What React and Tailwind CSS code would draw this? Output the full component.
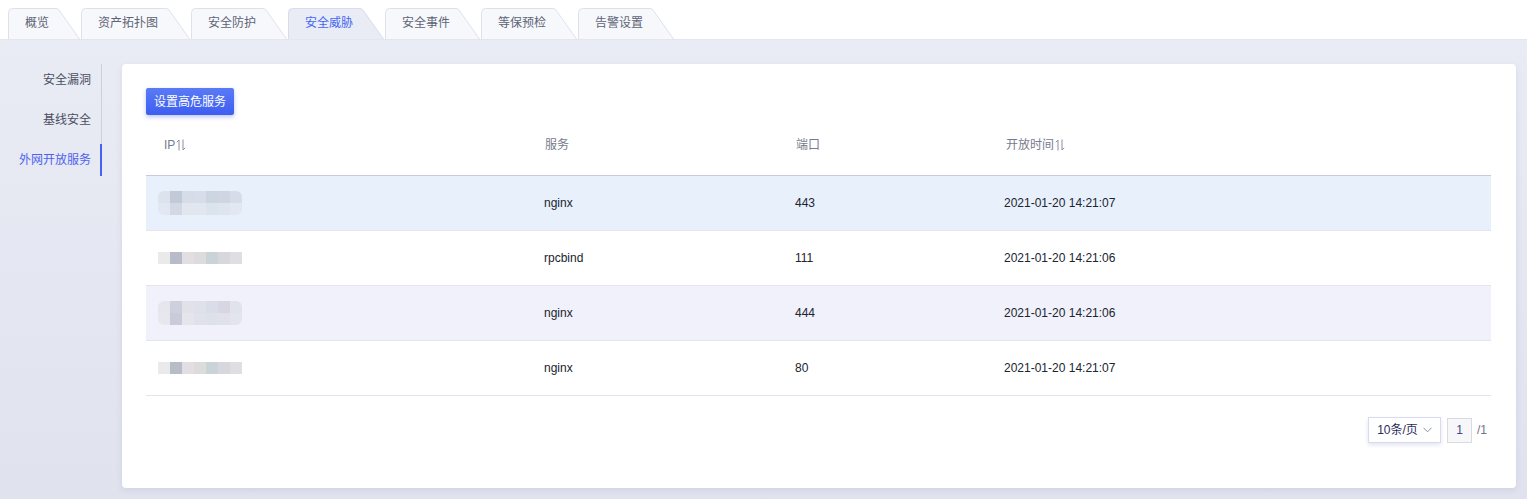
import React from "react";

const tabs = [
  { label: "概览", w: 72 },
  { label: "资产拓扑图", w: 109 },
  { label: "安全防护", w: 96 },
  { label: "安全威胁", w: 96, active: true },
  { label: "安全事件", w: 95 },
  { label: "等保预检", w: 96 },
  { label: "告警设置", w: 96 },
];

function Tab({ label, w, active }) {
  const h = 31;
  const d = `M0.5 ${h} V4.5 Q0.5 0.5 4.5 0.5 H${w - 24} Q${w - 22} 0.5 ${w - 21} 2 L${w - 0.5} ${h}`;
  return (
    <div className="relative h-[31px] shrink-0" style={{ width: w }}>
      <svg className="absolute inset-0" width={w} height={h + 1} viewBox={`0 0 ${w} ${h + 1}`}>
        <path d={d + " Z"} fill={active ? "#e9ebf5" : "#f7f8fc"} stroke="none" />
        <path d={d} fill="none" stroke={active ? "#d9dcee" : "#dfe0ee"} strokeWidth="1" />
      </svg>
      <span
        className={`relative block pl-[17px] pt-[8px] text-[12px] leading-[14px] ${
          active ? "text-[#4467f2]" : "text-[#5d6475]"
        }`}
      >
        {label}
      </span>
    </div>
  );
}

function SortIcon() {
  return (
    <svg width="10" height="12" viewBox="0 0 10 12" className="ml-[1px] inline-block">
      <path d="M3 11.5 V1 L0.8 3.2" fill="none" stroke="#8a8f9c" strokeWidth="1" />
      <path d="M7 0.5 V11 L9.2 8.8" fill="none" stroke="#8a8f9c" strokeWidth="1" />
    </svg>
  );
}

const blurs = {
  tall1: [
    ["#dde3ec", "#c2c9d8", "#d7dde8", "#d8dee9", "#ccd5e2", "#cfd6e2", "#d6dde8"],
    ["#e2e8f1", "#d2d9e5", "#e1e6ef", "#e1e7f0", "#dbe3ec", "#dfe5ee", "#e2e8f1"],
  ],
  short: [["#e9eae9", "#b8bcc8", "#e2dfe2", "#dcdcdc", "#c9d3d8", "#d8d7dc", "#dfdfe3"]],
  tall3: [
    ["#e6e7ee", "#ced0de", "#e2e0e8", "#dfe1ea", "#d9dde7", "#d8d6e3", "#e0e2ec"],
    ["#e7e8ef", "#c9cbd9", "#e5e5ed", "#e0e1eb", "#dde1ea", "#e1e1ec", "#e3e4ee"],
  ],
};

function Mosaic({ kind }) {
  const rows = blurs[kind];
  const rounded = kind === "short" ? "" : "rounded-[6px]";
  return (
    <div className={`flex flex-col overflow-hidden ${rounded} w-[84px]`}>
      {rows.map((r, i) => (
        <div key={i} className="flex h-[12px]">
          {r.map((c, j) => (
            <div key={j} className="w-[12px] h-full" style={{ background: c }} />
          ))}
        </div>
      ))}
    </div>
  );
}

const rows = [
  { ip: "tall1", svc: "nginx", port: "443", time: "2021-01-20 14:21:07", bg: "bg-[#e8f0fc]" },
  { ip: "short", svc: "rpcbind", port: "111", time: "2021-01-20 14:21:06", bg: "bg-white" },
  { ip: "tall3", svc: "nginx", port: "444", time: "2021-01-20 14:21:06", bg: "bg-[#f0f1fa]" },
  { ip: "short", svc: "nginx", port: "80", time: "2021-01-20 14:21:07", bg: "bg-white" },
];

export default function App() {
  return (
    <div
      className="w-[1527px] h-[499px] overflow-hidden bg-gradient-to-b from-[#eaecf5] to-[#e0e2ee] flex flex-col"
      style={{ fontFamily: '"Liberation Sans", "Noto Sans CJK SC", Arial, sans-serif' }}
    >
      {/* top tabs bar */}
      <div className="h-[39px] bg-white flex items-end pl-[8px] gap-[1px] border-b border-[#e3e5f0] box-content">
        {tabs.map((t) => (
          <Tab key={t.label} {...t} />
        ))}
      </div>

      <div className="flex flex-1 pt-[24px] pb-[11px]">
        {/* sidebar */}
        <div className="w-[102px] shrink-0">
          <div className="flex flex-col gap-2 border-r border-[#cdd0dc] w-[102px]">
            {["安全漏洞", "基线安全", "外网开放服务"].map((s, i) => (
              <div
                key={s}
                className={`relative h-8 flex items-center justify-end pr-[10px] text-[12px] ${
                  i === 2 ? "text-[#4d63f0]" : "text-[#4a4f5f]"
                }`}
              >
                {s}
                {i === 2 && <div className="absolute right-[-1px] top-0 bottom-0 w-[2px] bg-[#4562f3]" />}
              </div>
            ))}
          </div>
        </div>

        {/* card */}
        <div className="ml-[20px] w-[1394px] bg-white rounded-[4px] shadow-[0_2px_6px_rgba(60,70,120,0.1)] px-[24px] pt-[24px] flex flex-col">
          <div>
            <button className="h-[27px] w-[88px] rounded-[2px] bg-gradient-to-b from-[#5a7af6] to-[#3d5ef0] text-white text-[12px] shadow-[0_2px_4px_rgba(60,90,230,0.35)]">
              设置高危服务
            </button>
          </div>

          <div className="w-[1345px]">
            <div className="h-[61px] flex items-center border-b border-[#c7cbd7] text-[12px] text-[#767c8c]">
              <div className="w-[381px] pl-[18px] flex items-center">
                IP<SortIcon />
              </div>
              <div className="w-[251px] pl-[18px]">服务</div>
              <div className="w-[210px] pl-[18px]">端口</div>
              <div className="flex-1 pl-[18px] flex items-center">
                开放时间<SortIcon />
              </div>
            </div>
            {rows.map((r, i) => (
              <div
                key={i}
                className={`h-[55px] flex items-center border-b border-[#e3e5ee] text-[12px] text-[#20242f] ${r.bg}`}
              >
                <div className="w-[381px] pl-[12px]">
                  <Mosaic kind={r.ip} />
                </div>
                <div className="w-[251px] pl-[17px]">{r.svc}</div>
                <div className="w-[210px] pl-[17px]">{r.port}</div>
                <div className="flex-1 pl-[16px]">{r.time}</div>
              </div>
            ))}
          </div>

          <div className="flex justify-end items-center mt-[21px] w-[1345px] pr-[4px] text-[12px]">
            <div className="h-[26px] w-[73px] flex items-center justify-center gap-[5px] border border-[#d6dbf3] bg-white shadow-[0_2px_4px_rgba(70,80,140,0.15)] text-[#2b2d5a]">
              <span>10条/页</span>
              <svg width="9" height="6" viewBox="0 0 9 6">
                <path d="M0.5 0.8 L4.5 4.8 L8.5 0.8" fill="none" stroke="#8b90a0" strokeWidth="1" />
              </svg>
            </div>
            <div className="ml-[6px] h-[25px] w-[25px] flex items-center justify-center border border-[#dadbe1] bg-[#f7f7fa] text-[#3b4a84]">
              1
            </div>
            <span className="ml-[5px] text-[#6e7382]">/1</span>
          </div>
        </div>
      </div>
    </div>
  );
}
